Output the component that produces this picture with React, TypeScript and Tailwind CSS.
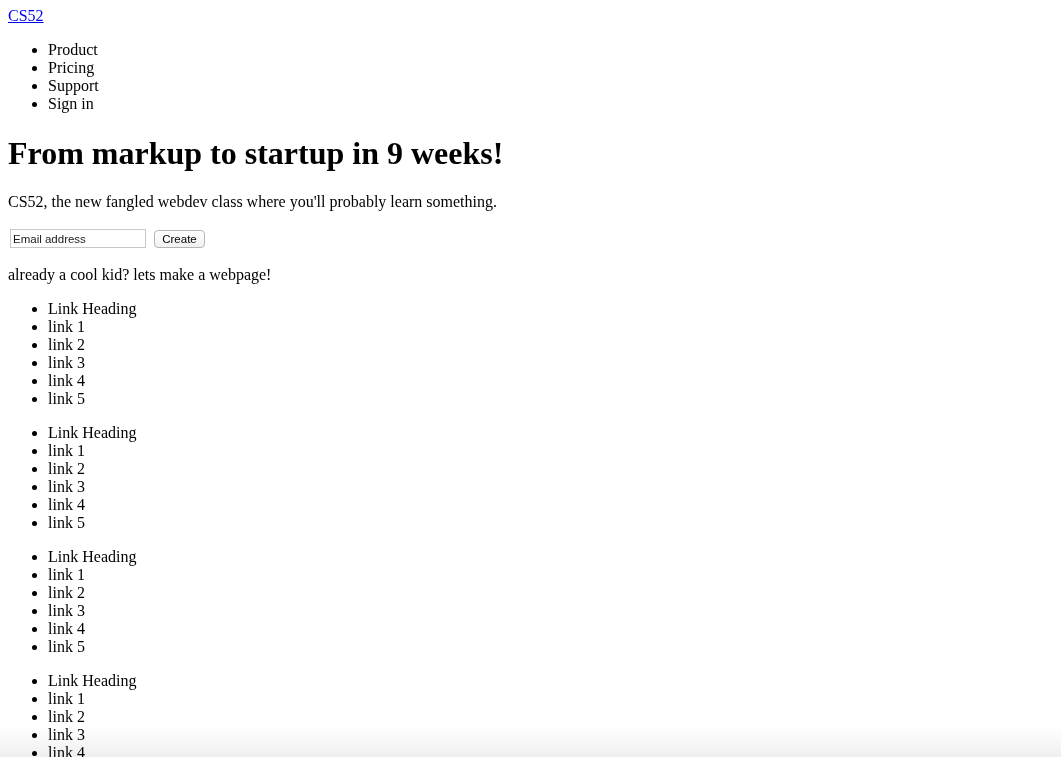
const navItems = ["Product", "Pricing", "Support", "Sign in"];
const links = ["link 1", "link 2", "link 3", "link 4", "link 5"];

function LinkList() {
  return (
    <ul className="my-4 list-disc pl-10">
      <li>Link Heading</li>
      {links.map((l) => (
        <li key={l}>{l}</li>
      ))}
    </ul>
  );
}

export default function App() {
  return (
    <div className="min-h-screen bg-white font-['Liberation_Serif',serif] text-[16px] leading-[18px] text-black">
      {/* bottom fade sits behind the text */}
      <div className="pointer-events-none fixed inset-x-0 bottom-0 h-[30px] bg-linear-to-b from-white to-[#efefef]" />
      <div className="relative px-2 pt-[7px] pb-2">
        <a href="#" className="text-[#0000ee] underline">
          CS52
        </a>
        <ul className="my-4 list-disc pl-10">
          {navItems.map((n) => (
            <li key={n}>{n}</li>
          ))}
        </ul>
        <h1 className="mt-[22px] mb-[21px] text-[32px] font-bold leading-[37px]">
          From markup to startup in 9 weeks!
        </h1>
        <p className="my-4">
          CS52, the new fangled webdev class where you'll probably learn something.
        </p>
        <form className="mt-[17px] mb-[17px] flex h-[21px] items-center font-['Liberation_Sans',sans-serif] text-[11.5px]">
          <input
            type="text"
            placeholder="Email address"
            className="mx-[2px] h-[19px] w-[136px] border border-[#c8c8c8] bg-white px-[2px] text-[11.5px] placeholder-[#1a1a1a] outline-none"
          />
          <button
            type="button"
            className="mt-[1px] ml-[6px] h-[18px] w-[51px] rounded-[4px] border border-[#b5b5b5] bg-linear-to-b from-white to-[#f1f1f1] text-[11.5px] leading-[16px]"
          >
            Create
          </button>
        </form>
        <p className="my-4">already a cool kid? lets make a webpage!</p>
        <LinkList />
        <LinkList />
        <LinkList />
        <LinkList />
      </div>
    </div>
  );
}
